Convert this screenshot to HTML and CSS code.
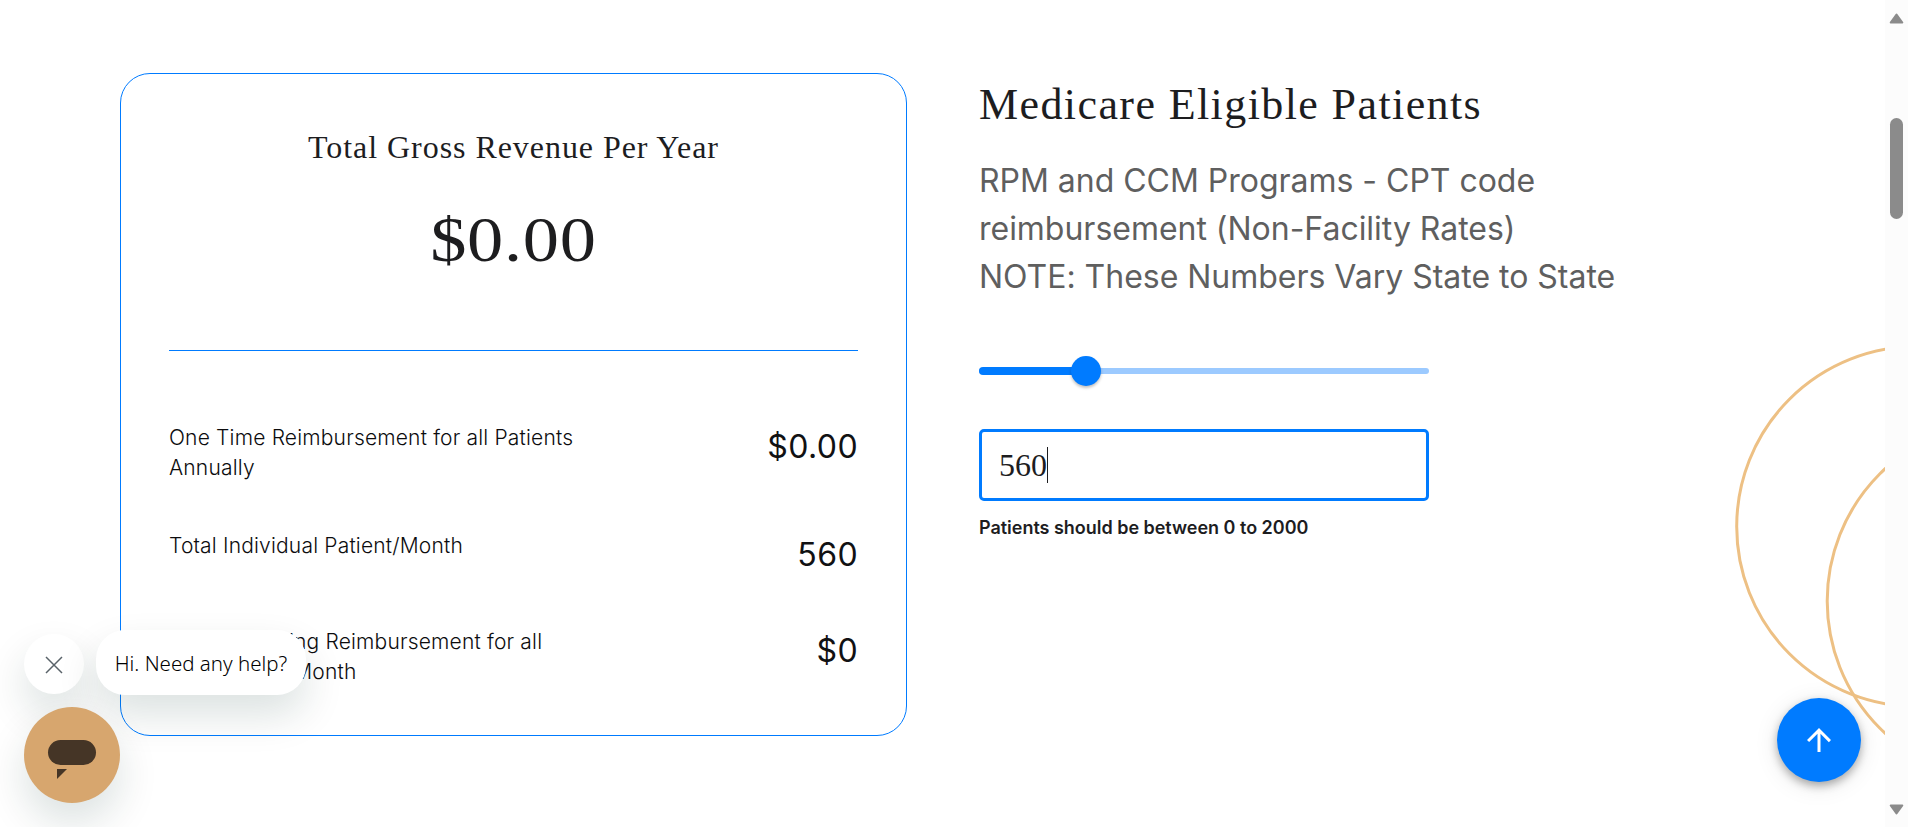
FILE: index.html
```html
<!DOCTYPE html>
<html lang="en">
<head>
<meta charset="utf-8">
<title>Medicare Eligible Patients</title>
<link rel="stylesheet" href="styles.css">
</head>
<body>
<main class="page">
  <section class="card">
    <h2 class="card-title">Total Gross Revenue Per Year</h2>
    <div class="total"><span class="total-text">$0.00</span></div>
    <div class="rows">
      <div class="row row-tall"><p class="label">One Time Reimbursement for all Patients Annually</p><span class="value">$0.00</span></div>
      <div class="row"><p class="label">Total Individual Patient/Month</p><span class="value">560</span></div>
      <div class="row"><p class="label">Total Recurring Reimbursement for all Patients Per Month</p><span class="value">$0</span></div>
    </div>
  </section>
  <section class="form">
    <h1 class="heading">Medicare Eligible Patients</h1>
    <p class="intro">RPM and CCM Programs - CPT code<br>reimbursement (Non-Facility Rates)<br>NOTE: These Numbers Vary State to State</p>
    <div class="slider"><div class="track"></div><div class="fill"></div><div class="thumb"></div></div>
    <div class="field"><span class="field-text">560</span><span class="caret"></span></div>
    <p class="hint">Patients should be between 0 to 2000</p>
  </section>
</main>
<svg class="rings" viewBox="0 0 165 460" aria-hidden="true"><g fill="none" stroke="#edc084" stroke-width="3"><circle cx="196.7" cy="186.5" r="180"/><circle cx="287.2" cy="261" r="180"/></g></svg>
<div class="close"><svg width="18" height="18" viewBox="0 0 18 18"><path d="M1 1l16 16M17 1L1 17" stroke="#596269" stroke-width="1.5" fill="none"/></svg></div>
<div class="bubble">Hi. Need any help?</div>
<div class="chat"><svg width="96" height="96" viewBox="0 0 96 96"><rect x="24" y="33" width="48" height="25" rx="12.5" fill="#453526"/><path d="M33 62h10L33 72z" fill="#453526"/></svg></div>
<div class="to-top"><svg width="36" height="36" viewBox="0 0 24 24"><path fill="#fff" d="M4 12l1.41 1.41L11 7.83V20h2V7.83l5.58 5.59L20 12l-8-8-8 8z"/></svg></div>
<div class="scrollbar">
  <svg width="15" height="11" viewBox="0 0 15 11"><path d="M7.5 1.5L13.3 9.5H1.7z" fill="#8b8b8b" stroke="#8b8b8b" stroke-width="2" stroke-linejoin="round"/></svg>
  <div class="scroll-thumb"></div>
  <svg class="down" width="15" height="11" viewBox="0 0 15 11"><path d="M7.5 9.5L1.7 1.5h11.6z" fill="#8b8b8b" stroke="#8b8b8b" stroke-width="2" stroke-linejoin="round"/></svg>
</div>
</body>
</html>
```

FILE: styles.css
```css
* { box-sizing: border-box; }
body { margin: 0; height: 827px; overflow: hidden; background: #fff; color: #1d1d1f; font-family: Inter, "Liberation Sans", sans-serif; }
h1, h2, p { margin: 0; font-weight: 400; }
.page { display: flex; align-items: flex-start; gap: 72px; padding: 73px 0 0 120px; }
.card { width: 787px; height: 663px; border: 1px solid #007bff; border-radius: 30px; padding: 49px 48px 0; }
.card-title { font: 400 32px/48px "Liberation Serif", serif; letter-spacing: 0.95px; text-align: center; white-space: nowrap; }
.total { font: 400 63px/76px "Liberation Serif", serif; text-align: center; padding: 31px 0 72px; height: 180px; border-bottom: 1px solid #007bff; }
.total-text { display: inline-block; transform: scaleX(1.15); letter-spacing: 0.6px; }
.rows { padding-top: 72px; }
.row { display: flex; justify-content: space-between; height: 96px; }
.row-tall { height: 108px; }
.label { width: 425px; font-size: 21px; font-weight: 300; line-height: 30px; letter-spacing: 0.18px; color: #0c0c0e; }
.value { font-size: 32px; line-height: 48px; letter-spacing: 0.4px; color: #111113; }
.form { width: 700px; }
.heading { padding-top: 2px; font: 400 44px/60px "Liberation Serif", serif; letter-spacing: 1.4px; white-space: nowrap; }
.intro { margin-top: 22px; font-size: 32px; line-height: 48px; color: #5f5f5f; letter-spacing: -0.02px; white-space: nowrap; }
.slider { position: relative; width: 450px; height: 30px; margin-top: 55px; display: flex; align-items: center; }
.track { width: 450px; height: 6px; border-radius: 3px; background: #9ccaff; }
.fill { position: absolute; left: 0; top: 11px; width: 108px; height: 8px; border-radius: 4px; background: #007bff; }
.thumb { position: absolute; left: 92px; top: 0; width: 30px; height: 30px; border-radius: 50%; background: #007bff; box-shadow: 0 2px 3px rgba(0,0,0,.25); }
.field { display: flex; align-items: center; width: 450px; height: 72px; margin-top: 43px; padding-left: 17px; border: 3px solid #007bff; border-radius: 5px; }
.field-text { font: 400 32px/36px "Liberation Serif", serif; }
.caret { width: 1px; height: 36px; background: #1d1d1f; }
.hint { margin-top: 13px; font-size: 18px; line-height: 28px; font-weight: 600; letter-spacing: -0.02px; white-space: nowrap; }
.rings { position: absolute; left: 1720px; top: 340px; width: 165px; height: 460px; overflow: hidden; }
.close, .bubble, .chat, .to-top { position: absolute; display: flex; align-items: center; justify-content: center; box-shadow: 0 20px 40px rgba(0,50,45,.14); }
.close { left: 24px; top: 634px; width: 60px; height: 60px; border-radius: 50%; background: #fff; padding-top: 2px; }
.bubble { left: 96px; top: 630px; width: 210px; height: 65px; border-radius: 29px; background: #fff; color: #000; font: 300 20.5px/30px "Noto Sans", sans-serif; padding-top: 1px; white-space: nowrap; }
.chat { left: 24px; top: 707px; width: 96px; height: 96px; border-radius: 50%; background: #d7a66e; }
.to-top { left: 1777px; top: 698px; width: 84px; height: 84px; border-radius: 50%; background: #007bff; box-shadow: 0 4px 8px rgba(0,0,0,.3), 0 4px 24px rgba(0,0,0,.1); }
.scrollbar { position: absolute; right: 0; top: 0; width: 23px; height: 827px; background: #fcfcfc; display: flex; flex-direction: column; align-items: center; padding: 13px 0 12px; }
.scroll-thumb { width: 13px; height: 101px; margin-top: 94px; border-radius: 7px; background: #8b8b8b; }
.down { margin-top: auto; }
```
